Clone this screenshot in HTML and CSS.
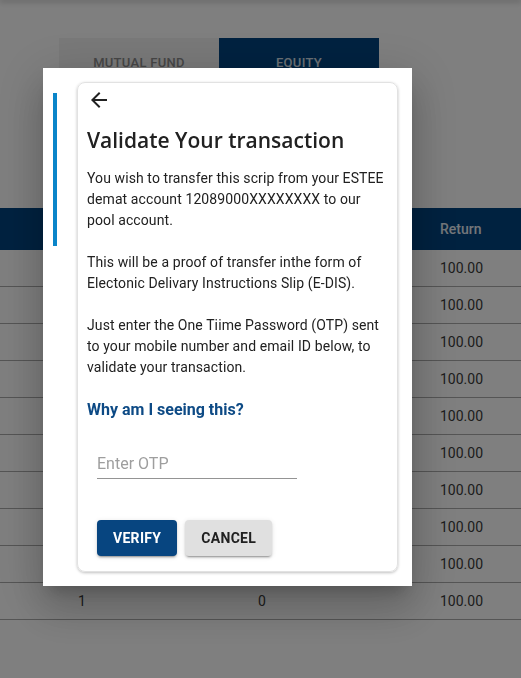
FILE: index.html
```html
<!DOCTYPE html>
<html>
<head>
<meta charset="utf-8">
<link rel="stylesheet" href="styles.css">
</head>
<body>
<div class="topbar"></div>
<main class="page">
  <div class="tabs">
    <div class="tab">MUTUAL FUND</div>
    <div class="tab tab-active">EQUITY</div>
  </div>
  <div class="table">
    <div class="row head"><span class="c1">Scrip</span><span>Qty</span><span>Return</span></div>
    <div class="row"><span class="c1">1</span><span>0</span><span>100.00</span></div>
    <div class="row"><span class="c1">1</span><span>0</span><span>100.00</span></div>
    <div class="row"><span class="c1">1</span><span>0</span><span>100.00</span></div>
    <div class="row"><span class="c1">1</span><span>0</span><span>100.00</span></div>
    <div class="row"><span class="c1">1</span><span>0</span><span>100.00</span></div>
    <div class="row"><span class="c1">1</span><span>0</span><span>100.00</span></div>
    <div class="row"><span class="c1">1</span><span>0</span><span>100.00</span></div>
    <div class="row"><span class="c1">1</span><span>0</span><span>100.00</span></div>
    <div class="row"><span class="c1">1</span><span>0</span><span>100.00</span></div>
    <div class="row"><span class="c1">1</span><span>0</span><span>100.00</span></div>
  </div>
</main>
<div class="overlay"></div>
<div class="dialog">
  <div class="accent"></div>
  <div class="card">
    <button class="back" aria-label="Back">
      <svg width="24" height="24" viewBox="0 0 24 24"><path d="M20 11H7.83l5.59-5.59L12 4l-8 8 8 8 1.41-1.41L7.83 13H20v-2z" fill="#212121"/></svg>
    </button>
    <h2 class="title">Validate Your transaction</h2>
    <p class="text">You wish to transfer this scrip from your ESTEE<br>demat account 12089000XXXXXXXX to our<br>pool account.<br><br>This will be a proof of transfer inthe form of<br>Electonic Delivary Instructions Slip (E-DIS).<br><br>Just enter the One Tiime Password (OTP) sent<br>to your mobile number and email ID below, to<br>validate your transaction.</p>
    <a class="why" href="#">Why am I seeing this?</a>
    <input class="otp" type="text" placeholder="Enter OTP">
    <div class="actions">
      <button class="btn btn-primary">VERIFY</button>
      <button class="btn btn-secondary">CANCEL</button>
    </div>
  </div>
</div>
</body>
</html>
```
FILE: styles.css
```css
html, body {
  margin: 0;
  padding: 0;
  background: #ffffff;
  font-family: Roboto, "Liberation Sans", sans-serif;
  overflow: hidden;
}
.topbar {
  height: 0;
  box-shadow: 0 0 6px 1px rgba(0,0,0,0.45);
}
.page {
  padding-top: 38px;
}
.tabs {
  display: flex;
  margin-left: 59px;
  height: 48px;
}
.tab {
  width: 160px;
  display: flex;
  align-items: center;
  justify-content: center;
  background: #f2f2f2;
  color: #8c8c8c;
  font-size: 13px;
  font-weight: 500;
  letter-spacing: 0.3px;
}
.tab-active {
  background: #004480;
  color: #d6e0ea;
}
.table {
  margin-top: 122px;
}
.row {
  display: grid;
  grid-template-columns: 258px 182px 1fr;
  height: 36px;
  align-items: center;
  border-bottom: 1px solid #aaaaaa;
  font-size: 14px;
  color: #3a3a3a;
}
.row.head {
  height: 42px;
  border-bottom: none;
  background: #004480;
  color: #e6edf4;
  font-weight: 500;
}
.c1 {
  padding-left: 78px;
}
.overlay {
  position: fixed;
  inset: 0;
  background: rgba(0,0,0,0.5);
}
.dialog {
  position: fixed;
  left: 43px;
  top: 68px;
  width: 369px;
  height: 518px;
  box-sizing: border-box;
  background: #fff;
  padding: 14px 14px 14px 10px;
  display: flex;
  gap: 20px;
  box-shadow: 0 11px 15px -7px rgba(0,0,0,.2), 0 24px 38px 3px rgba(0,0,0,.14), 0 9px 46px 8px rgba(0,0,0,.12);
}
.accent {
  width: 4px;
  height: 153px;
  margin-top: 11px;
  background: #0a85c9;
  flex: none;
}
.card {
  flex: 1;
  border: 1px solid #e2e2e2;
  border-radius: 8px;
  box-shadow: 0 1px 3px rgba(0,0,0,0.25);
  padding: 5px 8px 15px 9px;
  display: flex;
  flex-direction: column;
  align-items: flex-start;
}
.back {
  width: 24px;
  height: 24px;
  padding: 0;
  border: none;
  background: none;
  display: block;
}
.back svg { display: block; }
.title {
  margin: 14px 0 0;
  font-family: "Open Sans", "Noto Sans", sans-serif;
  font-weight: 600;
  font-size: 21px;
  line-height: 28px;
  color: #212121;
}
.text {
  margin: 14px 0 0;
  font-size: 14px;
  line-height: 21px;
  letter-spacing: 0.1px;
  white-space: nowrap;
  color: #212121;
}
.why {
  margin-top: 21px;
  font-size: 16px;
  line-height: 21px;
  font-weight: 700;
  color: #0d4a85;
  text-decoration: none;
}
.otp {
  margin: 31px 0 0 10px;
  width: 200px;
  box-sizing: border-box;
  padding: 2px 0 5px;
  border: none;
  border-bottom: 1px solid #949494;
  font-family: Roboto, sans-serif;
  font-size: 16px;
  line-height: 20px;
  height: 28px;
  outline: none;
  background: transparent;
}
.otp::placeholder { color: #9e9e9e; }
.actions {
  margin: 41px 0 0 10px;
  display: flex;
  gap: 8px;
}
.btn {
  height: 36px;
  padding: 0 16px;
  border: none;
  border-radius: 4px;
  font-family: Roboto, sans-serif;
  font-size: 14px;
  font-weight: 700;
  letter-spacing: 0.3px;
  box-shadow: 0 3px 1px -2px rgba(0,0,0,.2), 0 2px 2px 0 rgba(0,0,0,.14), 0 1px 5px 0 rgba(0,0,0,.12);
}
.btn-primary {
  background: #074580;
  color: #fff;
  min-width: 80px;
}
.btn-secondary {
  background: #e0e0e0;
  color: #212121;
  min-width: 87px;
}
```
